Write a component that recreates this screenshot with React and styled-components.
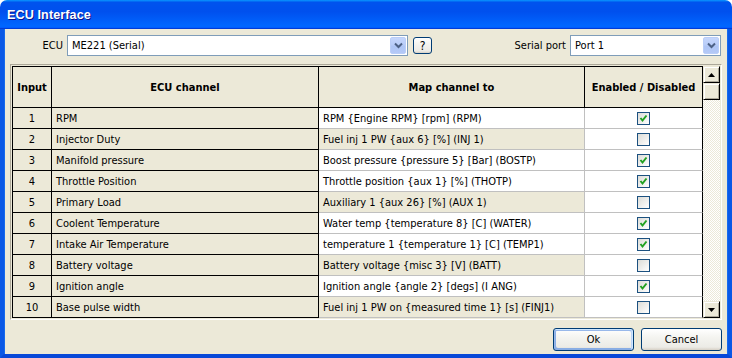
import React from 'react';
import styled, { createGlobalStyle, css } from 'styled-components';

const beige = '#ece9d8';
const uiFont = `'DejaVu Sans Condensed', 'Liberation Sans', Tahoma, sans-serif`;

const GlobalStyle = createGlobalStyle`
  html, body {
    margin: 0;
    padding: 0;
    background: #ffffff;
  }

  body {
    font-family: ${uiFont};
    font-size: 11px;
    color: #000;
  }

  * {
    box-sizing: border-box;
  }
`;

const Window = styled.div`
  width: 732px;
  height: 358px;
  display: flex;
  flex-direction: column;
`;

const TitleBar = styled.div`
  height: 29px;
  flex: none;
  display: flex;
  align-items: center;
  padding: 1px 0 0 7px;
  border-radius: 7px 7px 0 0;
  background: linear-gradient(
    to bottom,
    #0997ff 0%,
    #0053ee 8%,
    #0050ee 40%,
    #0066ff 88%,
    #0066ff 93%,
    #005bff 95%,
    #003dd7 96%,
    #003dd7 100%
  );
`;

const Title = styled.span`
  font-family: 'Liberation Sans', Arial, sans-serif;
  font-weight: bold;
  font-size: 12.6px;
  letter-spacing: 0.1px;
  color: #fff;
  text-shadow: 1px 1px #0f1089;
`;

const Client = styled.div`
  flex: 1;
  display: flex;
  flex-direction: column;
  background: ${beige};
  border: 4px solid #0055ea;
  border-top: none;
  box-shadow: inset 1px 0 #166aee, inset -1px 0 #166aee;
  border-left-color: #0a58e6;
  border-right-color: #0a58e6;
  border-bottom-color: #0848d8;
  padding: 6px 6px 3px;
`;

const TopRow = styled.div`
  height: 21px;
  display: flex;
  align-items: center;
`;

const Label = styled.span`
  width: ${p => p.width}px;
  text-align: right;
  padding-right: 4px;
`;

const Spacer = styled.div`
  flex: 1;
`;

const Combo = styled.div`
  width: ${p => p.width}px;
  height: 21px;
  display: flex;
  align-items: center;
  border: 1px solid #7f9db9;
  background: #fff;
  padding: 1px;
`;

const ComboText = styled.span`
  flex: 1;
  padding-left: 3px;
`;

const DropButton = styled.div`
  width: 16px;
  height: 17px;
  display: flex;
  align-items: center;
  justify-content: center;
  border: 1px solid #bacef8;
  border-radius: 2px;
  background: linear-gradient(to bottom, #c5d6fc 0%, #b9cdf8 45%, #aec5f5 55%, #b4c9f7 100%);
`;

const buttonLook = css`
  border: 1px solid #003c74;
  border-radius: 3px;
  background: linear-gradient(180deg, #ffffff 0%, #f4f4f0 40%, #ecebe6 86%, #d6d0c5 100%);
  color: #000;
  display: flex;
  align-items: center;
  justify-content: center;
  padding: 0;
`;

const HelpButton = styled.div`
  ${buttonLook};
  width: 19px;
  height: 17px;
  margin-left: 5px;
  font-size: 12px;
`;

const TableFrame = styled.div`
  margin-top: 8px;
  height: 256px;
  display: flex;
  border: 1px solid;
  border-color: #aca899 #ffffff #ffffff #aca899;
  padding: 1px;
  background: ${beige};
`;

const Grid = styled.div`
  display: grid;
  grid-template-columns: 39px 267px 266px 118px;
  grid-auto-rows: 21px;
  grid-template-rows: 41px;
  border-left: 1px solid #000;
  border-top: 1px solid #000;
  align-content: start;
`;

const HeadCell = styled.div`
  display: flex;
  align-items: center;
  justify-content: center;
  border-right: 1px solid #000;
  border-bottom: 1px solid #000;
  background: ${beige};
  font-weight: bold;
  white-space: nowrap;
`;

const Cell = styled.div`
  display: flex;
  align-items: center;
  justify-content: ${p => (p.center ? 'center' : 'flex-start')};
  padding-left: ${p => (p.center ? 0 : 4)}px;
  background: ${p => (p.white ? '#ffffff' : beige)};
  border-right: 1px solid ${p => (p.soft ? '#c0c0c0' : '#000')};
  border-bottom: 1px solid ${p => (p.softBottom ? '#c0c0c0' : '#000')};
  white-space: nowrap;
  overflow: hidden;
`;

const Check = styled.div`
  width: 13px;
  height: 13px;
  border: 1px solid #1c5180;
  background: linear-gradient(135deg, #dcdcd7 0%, #ffffff 100%);
  display: flex;
  align-items: center;
  justify-content: center;
`;

const ScrollBar = styled.div`
  width: 17px;
  display: flex;
  flex-direction: column;
  background-color: #fefefe;
  background-image: repeating-conic-gradient(${beige} 0% 25%, #ffffff 0% 50%);
  background-size: 2px 2px;
`;

const ScrollPart = styled.div`
  width: 17px;
  height: 17px;
  flex: none;
  display: flex;
  align-items: center;
  justify-content: center;
  background: ${beige};
  border: 1px solid;
  border-color: ${beige} #000 #000 ${beige};
  box-shadow: inset 1px 1px #fff, inset -1px -1px #aca899;
`;

const Footer = styled.div`
  margin-top: 8px;
  display: flex;
  justify-content: flex-end;
  gap: 7px;
`;

const DialogButton = styled.div`
  ${buttonLook};
  width: 81px;
  height: 23px;
  ${p =>
    p.isDefault &&
    css`
      box-shadow: inset -1px 1px #cee7ff, inset 1px 2px #98b8ea, inset -2px 2px #bcd4f6,
        inset 1px -1px #89ade4, inset 2px -2px #89ade4;
    `}
`;

const rows = [
  ['RPM', 'RPM {Engine RPM} [rpm] (RPM)', true],
  ['Injector Duty', 'Fuel inj 1 PW {aux 6} [%] (INJ 1)', false],
  ['Manifold pressure', 'Boost pressure {pressure 5} [Bar] (BOSTP)', true],
  ['Throttle Position', 'Throttle position {aux 1} [%] (THOTP)', true],
  ['Primary Load', 'Auxiliary 1 {aux 26} [%] (AUX 1)', false],
  ['Coolent Temperature', 'Water temp {temperature 8} [C] (WATER)', true],
  ['Intake Air Temperature', 'temperature 1 {temperature 1} [C] (TEMP1)', true],
  ['Battery voltage', 'Battery voltage {misc 3} [V] (BATT)', false],
  ['Ignition angle', 'Ignition angle {angle 2} [degs] (I ANG)', true],
  ['Base pulse width', 'Fuel inj 1 PW on {measured time 1} [s] (FINJ1)', false],
];

const Chevron = () => (
  <svg width="9" height="7" viewBox="0 0 9 7">
    <path d="M1 1.5 L4.5 5 L8 1.5" fill="none" stroke="#4d6185" strokeWidth="2" />
  </svg>
);

const Arrow = ({ down }) => (
  <svg width="7" height="4" viewBox="0 0 7 4">
    <path d={down ? 'M0 0 H7 L3.5 4 Z' : 'M0 4 H7 L3.5 0 Z'} fill="#000" />
  </svg>
);

const Tick = () => (
  <svg width="9" height="9" viewBox="0 0 9 9">
    <path d="M1.5 4 L3.5 6.5 L7.5 1.5" fill="none" stroke="#21a121" strokeWidth="2" />
  </svg>
);

const ComboBox = ({ width, value }) => (
  <Combo width={width}>
    <ComboText>{value}</ComboText>
    <DropButton>
      <Chevron />
    </DropButton>
  </Combo>
);

export default function App() {
  return (
    <>
      <GlobalStyle />
      <Window>
        <TitleBar>
          <Title>ECU Interface</Title>
        </TitleBar>
        <Client>
          <TopRow>
            <Label width={57}>ECU</Label>
            <ComboBox width={341} value="ME221 (Serial)" />
            <HelpButton>?</HelpButton>
            <Spacer />
            <Label width={70}>Serial port</Label>
            <ComboBox width={151} value="Port 1" />
            <Spacer style={{ flex: 'none', width: 1 }} />
          </TopRow>

          <TableFrame>
            <Grid>
              <HeadCell>Input</HeadCell>
              <HeadCell>ECU channel</HeadCell>
              <HeadCell>Map channel to</HeadCell>
              <HeadCell>Enabled / Disabled</HeadCell>
              {rows.map(([channel, mapTo, enabled], i) => (
                <React.Fragment key={channel}>
                  <Cell center>{i + 1}</Cell>
                  <Cell>{channel}</Cell>
                  <Cell white={enabled} soft softBottom>
                    {mapTo}
                  </Cell>
                  <Cell white center softBottom>
                    <Check>{enabled && <Tick />}</Check>
                  </Cell>
                </React.Fragment>
              ))}
            </Grid>
            <ScrollBar>
              <ScrollPart>
                <Arrow />
              </ScrollPart>
              <ScrollPart />
              <Spacer />
              <ScrollPart>
                <Arrow down />
              </ScrollPart>
            </ScrollBar>
          </TableFrame>

          <Footer>
            <DialogButton isDefault>Ok</DialogButton>
            <DialogButton>Cancel</DialogButton>
          </Footer>
        </Client>
      </Window>
    </>
  );
}
